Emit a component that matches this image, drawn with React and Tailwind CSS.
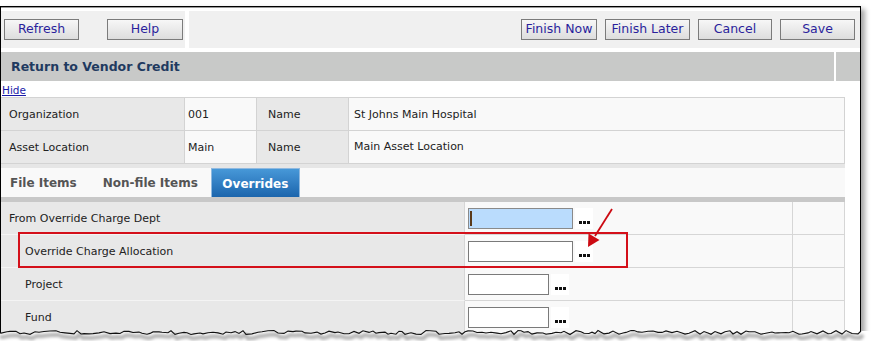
import React from "react";

const font = "font-['DejaVu_Sans',Verdana,sans-serif]";

const btn =
  "h-[21px] border border-[#7b7b7b] bg-gradient-to-b from-[#f7f7f7] to-[#dddddd] text-[12.5px] text-[#2a1f9c] leading-none flex items-center justify-center";

// jagged "torn paper" edge at the bottom of the screenshot frame
function tornPath() {
  let s = 11;
  const rnd = () => {
    s = (s * 9301 + 49297) % 233280;
    return s / 233280;
  };
  let d = "M -2 333";
  for (let x = 1; x < 861; x += 3 + Math.floor(rnd() * 4)) {
    d += ` L ${x} ${(330.5 + rnd() * 4).toFixed(1)}`;
  }
  d += " L 861 331";
  return d;
}

function Dots() {
  return (
    <span className="ml-[2px] flex h-[21px] w-[18px] items-end justify-center bg-white pb-[5px]">
      <svg width="11" height="3" viewBox="0 0 11 3">
        <rect x="0" y="0" width="3" height="3" fill="#111" />
        <rect x="4" y="0" width="3" height="3" fill="#111" />
        <rect x="8" y="0" width="3" height="3" fill="#111" />
      </svg>
    </span>
  );
}

const infoRows = [
  ["Organization", "001", "Name", "St Johns Main Hospital"],
  ["Asset Location", "Main", "Name", "Main Asset Location"],
];

const overrideRows = [
  { label: "From Override Charge Dept", indent: false, width: "w-[105px]", active: true },
  { label: "Override Charge Allocation", indent: true, width: "w-[105px]" },
  { label: "Project", indent: true, width: "w-[81px]" },
  { label: "Fund", indent: true, width: "w-[81px]" },
  { label: "", indent: true, width: "w-[81px]" },
];

export default function App() {
  const torn = tornPath();
  return (
    <div className={`relative h-[350px] w-[876px] overflow-hidden bg-white pt-[6px] ${font}`}>
      <div className="h-[340px] w-[861px] overflow-hidden border-x border-t border-black bg-white shadow-[4px_3px_5px_rgba(0,0,0,0.35)]">
        <div className="h-px bg-[#9a9a9a]" />
        {/* toolbar */}
        <div className="mt-[3px] flex h-[37px]">
          <div className="flex w-[184px] items-start gap-[28px] bg-[#f0f0f0] pl-[3px] pt-[8px]">
            <button className={`${btn} w-[75px]`}>Refresh</button>
            <button className={`${btn} w-[76px]`}>Help</button>
          </div>
          <div className="w-[4px] bg-white" />
          <div className="flex flex-1 items-start justify-end gap-[8px] bg-[#f0f0f0] pr-[5px] pt-[8px]">
            <button className={`${btn} w-[76px]`}>Finish Now</button>
            <button className={`${btn} w-[85px]`}>Finish Later</button>
            <button className={`${btn} w-[74px]`}>Cancel</button>
            <button className={`${btn} w-[75px]`}>Save</button>
          </div>
        </div>

        {/* title */}
        <div className="mt-[4px] flex h-[29px]">
          <div className="flex w-[833px] items-center bg-[#c8c9c8] pl-[10px] pt-[2px] text-[12.5px] font-bold text-[#1f3a60]">
            Return to Vendor Credit
          </div>
          <div className="w-[2px] bg-white" />
          <div className="flex-1 bg-[#c8c9c8]" />
        </div>

        <div className="h-[16px] pl-[1px] pt-[4px] text-[10.5px] leading-none text-[#1a1aa8] underline">
          Hide
        </div>

        {/* header info */}
        <div className="w-[844px] border-r border-t border-[#d3d3d3] text-[11px] text-[#222]">
          {infoRows.map((r, i) => (
            <div key={i} className="flex h-[33px] border-b border-[#d3d3d3]">
              <div className="flex w-[184px] items-center border-r border-[#d3d3d3] bg-[#e8e8e8] pl-[8px] pt-[2px]">{r[0]}</div>
              <div className="flex w-[72px] items-center border-r border-[#d3d3d3] bg-[#f9f9f9] pl-[3px] pt-[2px]">{r[1]}</div>
              <div className="flex w-[92px] items-center border-r border-[#d3d3d3] bg-[#e8e8e8] pl-[11px] pt-[2px]">{r[2]}</div>
              <div className={`flex flex-1 bg-[#f9f9f9] pl-[5px] ${i === 1 ? "items-start pt-[8px]" : "items-center pt-[2px]"}`}>
                {r[3]}
              </div>
            </div>
          ))}
        </div>

        {/* tabs */}
        <div className="h-[4px] w-[844px] bg-[#e6e6e6]" />
        <div className="flex h-[29px] w-[844px] items-stretch bg-[#f9f9f9] text-[12px] font-bold text-[#555]">
          <div className="flex items-center pl-[9px] pr-[26px] pt-[1px]">File Items</div>
          <div className="flex items-center pr-[13px] pt-[1px]">Non-file Items</div>
          <div className="flex w-[89px] items-center justify-center border-x border-t border-[#8fb9e0] bg-gradient-to-b from-[#4798d8] to-[#1b65ad] pt-[1px] text-white">
            Overrides
          </div>
        </div>
        <div className="h-[5px] w-[844px] bg-[#c8c8c8]" />

        {/* overrides */}
        <div className="w-[844px] border-r border-[#d6d6d6] text-[11px] text-[#222]">
          {overrideRows.map((r, i) => (
            <div key={i} className="flex h-[33px]">
              <div
                className={`flex w-[464px] items-center border-b border-r border-b-[#f4f4f4] border-r-[#d6d6d6] bg-[#e8e8e8] pt-[3px] ${
                  r.indent ? "pl-[24px]" : "pl-[8px]"
                }`}
              >
                {r.label}
              </div>
              <div className="flex w-[328px] items-start border-b border-r border-[#d6d6d6] bg-[#f9f9f9] pl-[3px] pt-[6px]">
                <span
                  className={`relative h-[21px] ${r.width} border ${
                    r.active ? "border-[#8a8a8a] bg-[#badcfd]" : "border-[#7a7a7a] bg-white"
                  }`}
                >
                  {r.active && <span className="absolute left-[1px] top-[2px] h-[15px] w-[2px] bg-[#5a3a1a]" />}
                </span>
                <Dots />
              </div>
              <div className="flex-1 border-b border-[#d6d6d6] bg-[#f9f9f9]" />
            </div>
          ))}
        </div>
      </div>

      {/* red highlight box */}
      <div className="pointer-events-none absolute left-[18px] top-[232px] h-[36px] w-[610px] border-2 border-[#d4101a]" />

      {/* arrow + torn edge */}
      <svg className="pointer-events-none absolute left-0 top-0" width="876" height="350" viewBox="0 0 876 350">
        <defs>
          <filter id="blur" x="-5%" y="-50%" width="110%" height="200%">
            <feGaussianBlur stdDeviation="1.8" />
          </filter>
        </defs>
        <line x1="612" y1="209" x2="595" y2="236" stroke="#cc0a12" strokeWidth="1.8" />
        <polygon points="588,247 588.5,233.5 599.5,240" fill="#cc0a12" />
        <path d={`${torn} L 876 331 L 876 350 L -2 350 Z`} fill="#ffffff" />
        <path d={torn} transform="translate(2 4)" fill="none" stroke="#000" strokeOpacity="0.3" strokeWidth="4" filter="url(#blur)" />
        <path d={torn} fill="none" stroke="#111" strokeWidth="1.1" />
      </svg>
    </div>
  );
}
